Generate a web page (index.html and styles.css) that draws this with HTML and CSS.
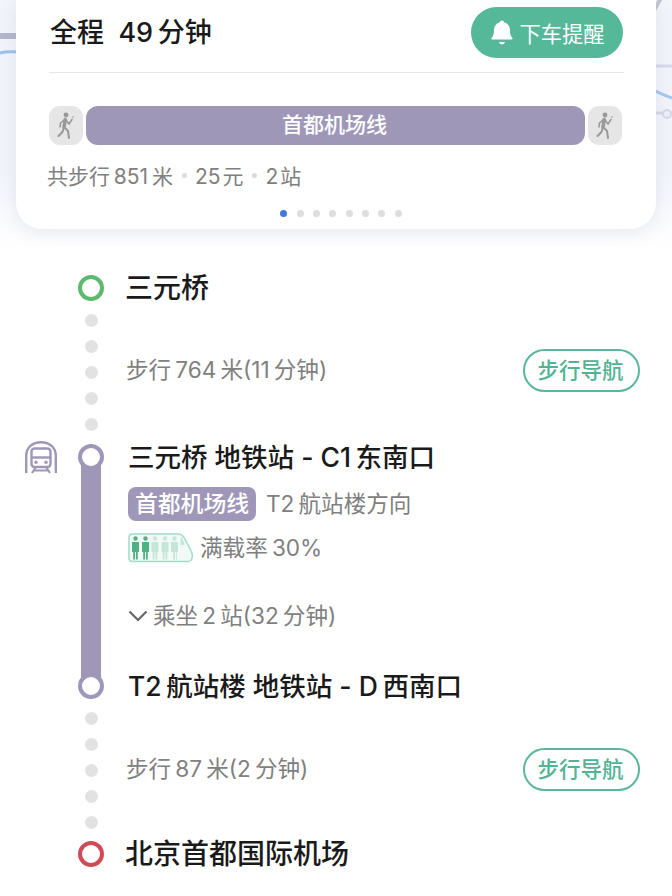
FILE: index.html
```html
<!DOCTYPE html>
<html>
<head>
    <meta charset="utf-8">
    <title>路线详情</title>
    <link rel="stylesheet" href="styles.css">
</head>
<body>
    <div class="header">
        <svg class="map" width="672" height="240" viewBox="0 0 672 240">
            <path d="M0 36 H20" stroke="#b4b6cb" stroke-width="6" fill="none"/>
            <path d="M0 53 Q6 51 20 52" stroke="#9fc0ea" stroke-width="3" fill="none"/>
            <path d="M652 14 L662 -4" stroke="#c3c6d2" stroke-width="4" fill="none"/>
            <path d="M650 66 H672" stroke="#d6d8ea" stroke-width="3" fill="none"/>
            <path d="M650 88 Q660 94 672 98" stroke="#a6c6f0" stroke-width="3" fill="none"/>
            <path d="M650 113 H672" stroke="#d6d8ea" stroke-width="3" fill="none"/>
            <circle cx="667" cy="114" r="4" fill="#eef0f8" stroke="#d6d8ea" stroke-width="2"/>
        </svg>
        <div class="card">
            <div class="card-top">
                <div class="total">全程 &nbsp;49&#8201;分钟</div>
                <div class="remind">
                    <svg width="22" height="25" viewBox="0 0 22 25">
                        <path d="M11 .5c1.200 0 2 .8 2 1.800 3.800 1 6 4 6 8 0 3.500.5 5.500 2.300 7.500.6.800.2 1.700-.8 1.700H1.500c-1 0-1.400-.9-.8-1.700C2.500 15.800 3 13.800 3 10.300c0-4 2.200-7 6-8 0-1 .8-1.800 2-1.800z" fill="#fff"/>
                        <path d="M8 22h6c-.4 1.500-1.600 2.300-3 2.300S8.400 23.500 8 22z" fill="#fff"/>
                    </svg>
                    <span>下车提醒</span>
                </div>
            </div>
            <div class="segments">
                <div class="walk-chip">
                    <svg width="20" height="27" viewBox="0 0 20 27"><use href="#walker"/></svg>
                </div>
                <div class="line-bar">首都机场线</div>
                <div class="walk-chip">
                    <svg width="20" height="27" viewBox="0 0 20 27">
                        <g id="walker" fill="none" stroke="#999" stroke-linecap="round" stroke-linejoin="round">
                            <circle cx="10" cy="3" r="2.400" fill="#999" stroke="none"/>
                            <path d="M9.200 7.500 8 15" stroke-width="3.600"/>
                            <path d="M10 8 13 12 16 7.500M8 8 4.500 11 4 15" stroke-width="1.600"/>
                            <path d="M8 15 12 19 13 26M8 15 6.500 20 2.500 24" stroke-width="2"/>
                            <circle cx="17" cy="5" r=".8" fill="#999" stroke="none"/>
                        </g>
                    </svg>
                </div>
            </div>
            <div class="summary">共步行&#8201;851&#8201;米<i class="sep"></i>25&#8202;元<i class="sep"></i>2&#8202;站</div>
            <div class="pager">
                <i class="active"></i><i></i><i></i><i></i><i></i><i></i><i></i><i></i>
            </div>
        </div>
    </div>

    <div class="route">
        <div class="row stop-row">
            <div class="rail"><span class="ring ring-green"></span></div>
            <div class="name name-walk">三元桥</div>
        </div>

        <div class="row walk-row">
            <div class="rail dots">
                <i></i><i></i><i></i><i></i><i></i>
            </div>
            <div class="walk-info">
                <span>步行&#8201;764&#8201;米(11&#8201;分钟)</span>
                <div class="nav-btn">步行导航</div>
            </div>
        </div>

        <div class="row ride-row">
            <svg class="mode" width="32" height="33" viewBox="0 0 32 33" fill="none" stroke="#9f97b8">
                <path d="M1.200 32V15C1.200 6.500 7.500 1.200 16 1.200S30.800 6.500 30.800 15V32" stroke-width="2.400"/>
                <rect x="6.500" y="7.500" width="19" height="18.500" rx="3" stroke-width="2.400"/>
                <path d="M7 16.500H25" stroke-width="2.400"/>
                <circle cx="11" cy="21.300" r="1.700" fill="#9f97b8" stroke="none"/>
                <circle cx="21" cy="21.300" r="1.700" fill="#9f97b8" stroke="none"/>
                <path d="M11 26 7 32M21 26 25 32M8.500 29.500H23.500" stroke-width="2.200"/>
            </svg>
            <div class="rail ride-rail">
                <span class="ring ring-purple"></span>
                <span class="bar"></span>
                <span class="ring ring-purple"></span>
            </div>
            <div class="ride-info">
                <div class="name">三元桥 地铁站 - C1&#8201;东南口</div>
                <div class="line-info">
                    <span class="tag">首都机场线</span>
                    <span>T2&#8201;航站楼方向</span>
                </div>
                <div class="load">
                    <svg width="65" height="30" viewBox="0 0 65 30">
                        <path d="M4.500 1H50c3 0 4.500 1.200 6 3.500l7 13c2 4 2 11-3 11H4.500C2.500 28.500 1 27 1 25V4.500C1 2.500 2.500 1 4.500 1z" fill="#f1faf6" stroke="#a3dcc7" stroke-width="1.500"/>
                        <g fill="#4fb285">
                            <circle cx="7.500" cy="5.500" r="2.200"/>
                            <path d="M4 9h7v10h-1.200v7.500H8V19H7v7.500H5.200V19H4z"/>
                            <circle cx="17.500" cy="5.500" r="2.200"/>
                            <path d="M14 9h7v10h-1.200v7.500H18V19h-1v7.500h-1.800V19H14z"/>
                        </g>
                        <g fill="#c4e7da">
                            <circle cx="27" cy="5.500" r="2.200"/>
                            <path d="M23.500 9h7v10h-1.200v7.500h-1.800V19h-1v7.500h-1.800V19h-1.200z"/>
                            <circle cx="37" cy="5.500" r="2.200"/>
                            <path d="M33.500 9h7v10h-1.200v7.500h-1.800V19h-1v7.500h-1.800V19h-1.200z"/>
                            <circle cx="46.500" cy="5.500" r="2.200"/>
                            <path d="M43 9h7v10h-1.200v7.500H48V19h-1v7.500h-1.800V19H43z"/>
                            <path d="M52.500 4.500h1.500l2.500 6.500v1h-4z"/>
                        </g>
                    </svg>
                    <span>满载率&#8201;30%</span>
                </div>
                <div class="expand">
                    <svg width="20" height="12" viewBox="0 0 20 12" fill="none" stroke="#666" stroke-width="2.200">
                        <path d="M1.500 1.500 10 10 18.500 1.500"/>
                    </svg>
                    <span>乘坐&#8201;2&#8201;站(32&#8201;分钟)</span>
                </div>
                <div class="name">T2&#8201;航站楼 地铁站 - D&#8201;西南口</div>
            </div>
        </div>

        <div class="row walk-row walk-row-2">
            <div class="rail dots">
                <i></i><i></i><i></i><i></i><i></i>
            </div>
            <div class="walk-info">
                <span>步行&#8201;87&#8201;米(2&#8201;分钟)</span>
                <div class="nav-btn">步行导航</div>
            </div>
        </div>

        <div class="row stop-row">
            <div class="rail"><span class="ring ring-red"></span></div>
            <div class="name name-walk">北京首都国际机场</div>
        </div>
    </div>
</body>
</html>
```

FILE: styles.css
```css
html, body { margin: 0; padding: 0; }
body {
    width: 672px;
    height: 896px;
    overflow: hidden;
    background: #fff;
    color: #1a1a1a;
    font-family: Inter, "Noto Sans CJK SC", sans-serif;
}
i { display: block; }

/* top card over the map */
.header {
    position: relative;
    height: 249px;
    padding: 0 16px;
    box-sizing: border-box;
    background: linear-gradient(#f3f5fc 0, #f3f5fc 170px, #fff 249px);
}
.map { position: absolute; left: 0; top: 0; }
.card {
    position: relative;
    height: 229px;
    box-sizing: border-box;
    padding: 7px 32px 0 32px;
    background: #fff;
    border-radius: 0 0 26px 26px;
    box-shadow: 0 4px 18px rgba(120, 125, 160, 0.16);
}
.card-top {
    display: flex;
    justify-content: space-between;
    align-items: center;
    height: 51px;
    margin-left: 1px;
    padding: 0 1px 14px 1px;
    border-bottom: 1px solid #e8e8e8;
}
.total { font-size: 27px; font-weight: 500; padding-bottom: 4px; }
.remind {
    display: flex;
    align-items: center;
    justify-content: center;
    gap: 6px;
    box-sizing: border-box;
    width: 152px;
    height: 51px;
    padding-left: 2px;
    border-radius: 26px;
    background: #55b899;
    color: #fff;
    font-size: 21.3px;
}
.segments {
    display: flex;
    gap: 3px;
    height: 39px;
    margin: 33px 2px 0 1px;
}
.walk-chip {
    display: flex;
    align-items: center;
    justify-content: center;
    width: 34px;
    flex: none;
    background: #e6e6e6;
    border-radius: 11px;
}
.line-bar {
    flex: 1;
    text-align: center;
    line-height: 38px;
    padding-right: 2px;
    background: #9f97b8;
    border-radius: 12px;
    color: #fff;
    font-size: 21px;
    font-weight: 500;
}
.summary {
    display: flex;
    align-items: center;
    height: 26px;
    margin: 17px 0 0 -1px;
    font-size: 21px;
    color: #808080;
}
.sep {
    width: 5px;
    height: 5px;
    margin: 0 8px 0 9px;
    border-radius: 50%;
    background: #dcdcdc;
}
.pager {
    display: flex;
    justify-content: center;
    gap: 9.3px;
    margin: 22px 0 0 10px;
}
.pager i {
    width: 7px;
    height: 7px;
    border-radius: 50%;
    background: #dedede;
}
.pager .active { background: #3f78e0; }

/* route timeline */
.route { padding: 26px 32px 0 25px; }
.row {
    display: grid;
    grid-template-columns: 32px 26px 1fr;
    column-gap: 21px;
}
.rail {
    grid-column: 2;
    display: flex;
    flex-direction: column;
    align-items: center;
}
.ring {
    flex: none;
    width: 26px;
    height: 26px;
    box-sizing: border-box;
    border-radius: 50%;
    border: 4px solid;
    background: #fff;
    position: relative;
}
.ring-green { border-color: #5cb96e; }
.ring-purple { border-color: #9f97b8; }
.ring-red { border-color: #d24a55; }
.name {
    height: 26px;
    line-height: 26px;
    font-size: 26.5px;
    font-weight: 500;
    white-space: nowrap;
    margin-left: 3px;
}
.name-walk { font-size: 28px; margin-left: 0; }
.row > .name, .row > .walk-info, .row > .ride-info { grid-column: 3; }

.walk-row { height: 143px; }
.walk-row-2 { height: 142px; }
.dots { justify-content: center; gap: 13px; }
.dots i {
    width: 13px;
    height: 13px;
    border-radius: 50%;
    background: #e2e2e2;
}
.walk-info {
    display: flex;
    justify-content: space-between;
    align-items: center;
    padding-bottom: 5px;
    margin-left: 1px;
    font-size: 22.6px;
    line-height: 26px;
    color: #808080;
}
.walk-row-2 .walk-info { padding-bottom: 2px; }
.nav-btn {
    box-sizing: border-box;
    width: 117px;
    height: 43px;
    line-height: 38px;
    padding-right: 2px;
    text-align: center;
    border: 2px solid #5bb79b;
    border-radius: 22px;
    color: #52b394;
    font-size: 21.5px;
    font-weight: 500;
    background: #fff;
}

.ride-row { height: 255px; }
.mode { grid-column: 1; margin-top: -3px; }
.ride-rail { height: 255px; }
.bar {
    flex: 1;
    width: 20px;
    margin: -7px 0;
    background: #9f97b8;
}
.ride-info { display: flex; flex-direction: column; }
.line-info {
    display: flex;
    align-items: center;
    gap: 10px;
    height: 34px;
    margin: 17px 0 0 3px;
    font-size: 22.6px;
    line-height: 26px;
    color: #808080;
}
.tag {
    height: 34px;
    line-height: 34px;
    padding: 0 7px;
    border-radius: 8px;
    background: #9f97b8;
    color: #fff;
    font-size: 22.8px;
    font-weight: 500;
}
.load {
    display: flex;
    align-items: center;
    gap: 7px;
    height: 30px;
    margin: 12px 0 0 3px;
    font-size: 22.6px;
    line-height: 26px;
    color: #808080;
}
.expand {
    display: flex;
    align-items: center;
    gap: 5px;
    height: 28px;
    margin: 39px 0 0 3px;
    font-size: 22.6px;
    line-height: 26px;
    color: #808080;
}
.expand + .name { margin-top: 43px; }
```
